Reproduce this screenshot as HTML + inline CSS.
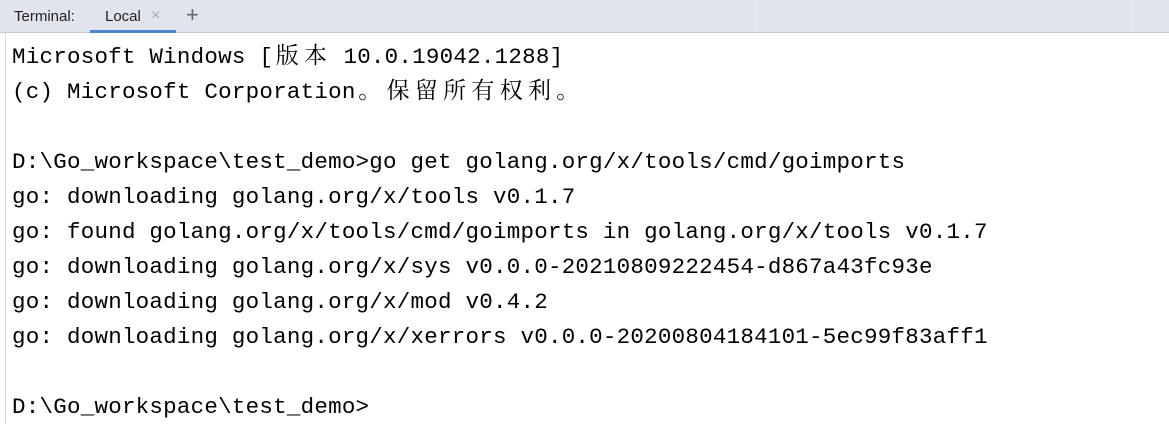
<!DOCTYPE html>
<html><head><meta charset="utf-8"><style>
html,body{margin:0;padding:0;width:1169px;height:424px;overflow:hidden;background:#fff;}
.hdr{position:absolute;left:0;top:0;width:1169px;height:33px;background:#e1e4ec;border-bottom:1px solid #c9c9c9;box-sizing:border-box;font-family:"Liberation Sans",sans-serif;font-size:15px;color:#222;}
.sep{position:absolute;top:0;width:1px;height:32px;background:#ececf0;}
.lbl{position:absolute;top:8px;}
.ul{position:absolute;left:90px;top:30px;width:86px;height:3px;background:#4a86c8;}
.leftline{position:absolute;left:5px;top:33px;width:1px;height:391px;background:#d8d8d8;}
pre{position:absolute;left:12px;top:39.5px;margin:0;font-family:"Liberation Mono","Noto Sans CJK SC",monospace;font-size:22.5px;line-height:35px;color:#000;letter-spacing:0.24px;}
.c{display:inline-block;width:28.3px;text-align:center;font-family:"Noto Serif CJK SC","Noto Sans CJK SC",serif;font-size:23px;letter-spacing:0;line-height:20px;}
</style></head><body>
<div class="hdr">
<span class="lbl" style="left:14px">Terminal:</span>
<span class="lbl" style="left:105px">Local</span>
<span class="lbl" style="left:151px;color:#aaa;font-size:16px;top:7px">×</span>
<span class="lbl" style="left:186px;color:#666;font-size:22px;top:2px">+</span>
<div class="ul"></div>
<div class="sep" style="left:756px"></div>
<div class="sep" style="left:1131px"></div>
</div>
<div class="leftline"></div>
<pre>Microsoft Windows [<span class="c">版</span><span class="c">本</span> 10.0.19042.1288]
(c) Microsoft Corporation<span class="c">。</span><span class="c">保</span><span class="c">留</span><span class="c">所</span><span class="c">有</span><span class="c">权</span><span class="c">利</span><span class="c">。</span>

D:\Go_workspace\test_demo>go get golang.org/x/tools/cmd/goimports
go: downloading golang.org/x/tools v0.1.7
go: found golang.org/x/tools/cmd/goimports in golang.org/x/tools v0.1.7
go: downloading golang.org/x/sys v0.0.0-20210809222454-d867a43fc93e
go: downloading golang.org/x/mod v0.4.2
go: downloading golang.org/x/xerrors v0.0.0-20200804184101-5ec99f83aff1

D:\Go_workspace\test_demo></pre>
</body></html>
